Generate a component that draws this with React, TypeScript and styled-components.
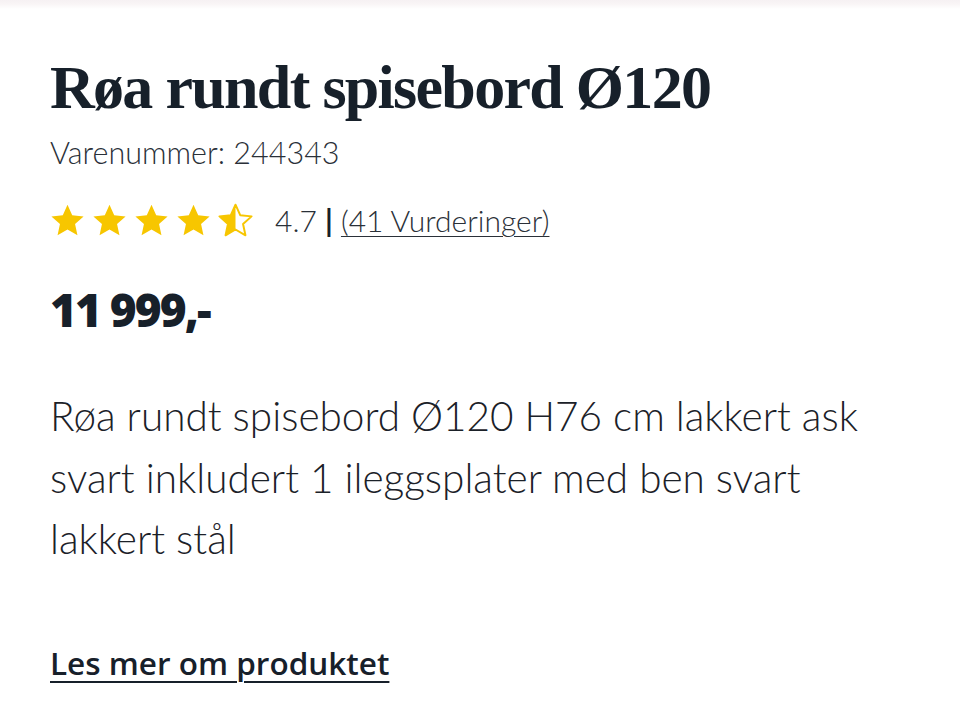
import React from "react";
import styled, { createGlobalStyle } from "styled-components";

const Global = createGlobalStyle`
  html, body { margin: 0; padding: 0; background: #ffffff; }
  body { font-family: "Lato", "Open Sans", sans-serif; color: #1b2128; }
`;

const Page = styled.div`
  width: 960px;
  min-height: 727px;
  background: linear-gradient(#f6f1f3 0px, #f9f5f6 4px, #ffffff 9px);
  box-sizing: border-box;
  padding: 49px 50px 0 50px;
`;

const Title = styled.h1`
  margin: 0;
  font-family: "Liberation Serif", "DejaVu Serif", serif;
  font-weight: 700;
  font-size: 62px;
  line-height: 76px;
  letter-spacing: -1.7px;
  color: #17202a;
`;

const Sku = styled.div`
  margin-top: 7px;
  font-family: "Lato", sans-serif;
  font-weight: 300;
  font-size: 30.5px;
  line-height: 40px;
  color: #2a3038;
`;

const RatingRow = styled.div`
  margin-top: 30px;
  display: flex;
  align-items: center;
  gap: 22px;
`;

const Stars = styled.div`
  display: flex;
  gap: 7px;
`;

const RatingText = styled.span`
  font-family: "Lato", sans-serif;
  font-weight: 300;
  font-size: 30px;
  color: #2a3038;
  white-space: pre;
`;

const Bar = styled.span`
  font-weight: 700;
  color: #17202a;
`;

const RatingLink = styled.a`
  color: #2a3038;
  text-decoration: underline;
  text-decoration-thickness: 1px;
  text-underline-offset: 4px;
`;

const Price = styled.div`
  margin-top: 41px;
  font-family: "Open Sans", sans-serif;
  font-weight: 800;
  font-size: 46px;
  line-height: 60px;
  letter-spacing: -2px;
  color: #17202a;
`;

const Description = styled.p`
  margin: 46px 0 0 0;
  max-width: 870px;
  font-family: "Lato", sans-serif;
  font-weight: 300;
  font-size: 40.5px;
  line-height: 61.5px;
  color: #1b2128;
`;

const MoreLink = styled.a`
  display: inline-block;
  margin-top: 71px;
  font-family: "Open Sans", sans-serif;
  font-weight: 600;
  font-size: 31.5px;
  color: #17202a;
  text-decoration: underline;
  text-decoration-thickness: 2px;
  text-underline-offset: 6px;
`;

const STAR = "M16 1.5l4.3 9.6 10.4 1.1-7.8 7 2.2 10.3L16 24.2l-9.1 5.3 2.2-10.3-7.8-7 10.4-1.1z";

const Star: React.FC<{ kind: "full" | "half" }> = ({ kind }) => (
  <svg width="35" height="34" viewBox="0 0 32 31">
    <defs>
      <clipPath id="leftHalf">
        <rect x="0" y="0" width="16" height="31" />
      </clipPath>
    </defs>
    {kind === "full" ? (
      <path d={STAR} fill="#f7c600" />
    ) : (
      <>
        <path d={STAR} fill="#f7c600" clipPath="url(#leftHalf)" />
        <path d={STAR} fill="none" stroke="#f7c600" strokeWidth="1.8" strokeLinejoin="round" />
      </>
    )}
  </svg>
);

export default function App() {
  return (
    <>
      <Global />
      <Page>
        <Title>Røa rundt spisebord Ø120</Title>
        <Sku>Varenummer: 244343</Sku>
        <RatingRow>
          <Stars>
            <Star kind="full" />
            <Star kind="full" />
            <Star kind="full" />
            <Star kind="full" />
            <Star kind="half" />
          </Stars>
          <RatingText>
            4.7 <Bar>|</Bar> <RatingLink href="#">(41 Vurderinger)</RatingLink>
          </RatingText>
        </RatingRow>
        <Price>11 999,-</Price>
        <Description>
          Røa rundt spisebord Ø120 H76 cm lakkert ask svart inkludert 1 ileggsplater med ben svart lakkert stål
        </Description>
        <MoreLink href="#">Les mer om produktet</MoreLink>
      </Page>
    </>
  );
}
